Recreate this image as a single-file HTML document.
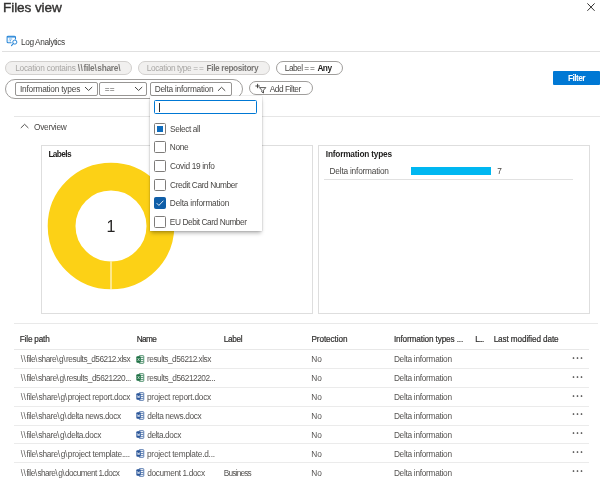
<!DOCTYPE html>
<html lang="en">
<head>
<meta charset="utf-8">
<title>Files view</title>
<style>
html,body{margin:0;padding:0;background:#fff;}
body{will-change:transform;width:603px;height:480px;position:relative;overflow:hidden;font-family:"Liberation Sans",sans-serif;color:#323130;font-size:8.3px;}
.a{position:absolute;white-space:nowrap;line-height:1;}
.hl{position:absolute;height:1px;background:#e3e3e3;}
.pill{position:absolute;box-sizing:border-box;border:1px solid #a09e9c;border-radius:8px;background:#fff;}
.pill.dis{background:#f1f0ef;border-color:#d2d0ce;}
.sel{position:absolute;box-sizing:border-box;border:1px solid #979593;border-radius:2px;background:#fff;}
.cb{position:absolute;box-sizing:border-box;width:12px;height:12px;border:1px solid #7e7c7a;border-radius:1.5px;background:#fff;}
.card{position:absolute;box-sizing:border-box;border:1px solid #dedede;background:#fff;}
b{font-weight:700;}
.bs{letter-spacing:0.55px;}
</style>
</head>
<body>

<!-- Title -->
<div class="a" id="title" style="left:3.06px;top:0.8px;font-size:13.6px;letter-spacing:-0.100px;color:#323130;-webkit-text-stroke:0.38px #323130;">Files view</div>
<svg class="a" style="left:586px;top:2px" width="10" height="10" viewBox="0 0 10 10"><path d="M1.4 1.4 L8.6 8.8 M8.6 1.4 L1.4 8.8" stroke="#323130" stroke-width="1" fill="none"/></svg>
<svg class="a" style="left:6px;top:35px" width="12" height="12" viewBox="0 0 12 12">
 <path d="M1.1 6.8 V2.2 Q1.1 1.2 2.1 1.2 H8.5 Q9.5 1.2 9.5 2.2 V4.6 M1.1 6.8 Q1.1 7.8 2.1 7.8 H5.6" stroke="#2b88d8" stroke-width="1.05" fill="none"/>
 <path d="M1.3 1.9 H9.3" stroke="#2b88d8" stroke-width="1.3"/>
 <path d="M2.9 4 H6.2" stroke="#4ba0e8" stroke-width="0.8"/>
 <path d="M3.1 6.4 V5.4 M4.5 6.4 V5" stroke="#4ba0e8" stroke-width="0.8"/>
 <circle cx="8.8" cy="7.1" r="2.05" stroke="#2b88d8" stroke-width="1" fill="#fff"/>
 <path d="M7.3 8.7 L5.5 10.7" stroke="#2b88d8" stroke-width="1.1" stroke-linecap="round"/>
</svg>
<div class="a" id="la" style="left:21.00px;top:38px;font-size:8.3px;letter-spacing:-0.396px;color:#3b3a39;">Log Analytics</div>
<div class="hl" style="left:2px;top:51px;width:598px;background:#e0e0e0;"></div>
<div class="pill dis" style="left:5.3px;top:61px;width:126.5px;height:14px;"></div>
<div class="a" id="p1" style="left:15.20px;top:64.2px;font-size:8.3px;letter-spacing:-0.245px;color:#a8a6a4;">Location contains <b style="color:#7a7876"><span class="bs">\</span><span class="bs">\</span>file<span class="bs">\</span>share<span class="bs">\</span></b></div>
<div class="pill dis" style="left:137.5px;top:61px;width:132.5px;height:14px;"></div>
<div class="a" id="p2" style="left:146.70px;top:64.2px;font-size:8.3px;letter-spacing:-0.365px;color:#a8a6a4;">Location type <span style="letter-spacing:0.8px">==</span> <b style="color:#7a7876">File repository</b></div>
<div class="pill" style="left:275.5px;top:61px;width:67.8px;height:14px;"></div>
<div class="a" id="p3" style="left:284.85px;top:64.2px;font-size:8.3px;letter-spacing:-0.527px;color:#484644;">Label <span style="letter-spacing:0.8px">==</span> <b style="color:#201f1e">Any</b></div>
<div class="a" style="left:553.3px;top:71.2px;width:47px;height:13.8px;background:#0078d4;border-radius:1px;"></div>
<div class="a" id="fb" style="left:568.10px;top:74.0px;font-size:8.3px;letter-spacing:-0.570px;color:#fff;font-weight:700;">Filter</div>
<div class="pill" style="left:5.3px;top:78.5px;width:237.5px;height:20px;border-radius:10px;"></div>
<div class="sel" style="left:14.8px;top:81.5px;width:83px;height:14px;"></div>
<div class="a" id="s1" style="left:19.95px;top:84.8px;font-size:8.3px;letter-spacing:-0.206px;color:#484644;">Information types</div>
<svg class="a" style="left:84px;top:85.8px" width="9.2" height="6" viewBox="0 0 9.2 6"><path d="M1 1 L4.6 4.5 L8.2 1" stroke="#484644" stroke-width="1" fill="none"/></svg>
<div class="sel" style="left:99.4px;top:81.5px;width:47.9px;height:14px;"></div>
<div class="a" id="s2" style="left:104.80px;top:84.8px;font-size:8.3px;letter-spacing:0.200px;color:#484644;">==</div>
<svg class="a" style="left:133.7px;top:85.8px" width="9.2" height="6" viewBox="0 0 9.2 6"><path d="M1 1 L4.6 4.5 L8.2 1" stroke="#484644" stroke-width="1" fill="none"/></svg>
<div class="sel" style="left:149.8px;top:81.5px;width:82px;height:14px;"></div>
<div class="a" id="s3" style="left:154.70px;top:84.8px;font-size:8.3px;letter-spacing:-0.238px;color:#484644;">Delta information</div>
<svg class="a" style="left:217.4px;top:85.8px" width="9.2" height="6" viewBox="0 0 9.2 6"><path d="M1 4.8 L4.6 1.3 L8.2 4.8" stroke="#484644" stroke-width="1" fill="none"/></svg>
<div class="pill" style="left:248.8px;top:81.2px;width:64px;height:14.3px;"></div>
<svg class="a" style="left:255px;top:83px" width="12" height="11" viewBox="0 0 12 11">
 <path d="M2.6 0.8 V5.2 M0.4 3 H4.8" stroke="#323130" stroke-width="0.9" fill="none"/>
 <path d="M4.4 4.6 H10.8 L8.5 7.2 V10 L6.8 9 V7.2 Z" stroke="#323130" stroke-width="0.8" fill="#fff" stroke-linejoin="round"/>
</svg>
<div class="a" id="af" style="left:269.70px;top:84.6px;font-size:8.3px;letter-spacing:-0.433px;color:#484644;">Add Filter</div>
<div class="hl" style="left:14px;top:116px;width:586px;background:#e6e6e6;"></div>
<svg class="a" style="left:19.8px;top:123.4px" width="9.2" height="6" viewBox="0 0 9.2 6"><path d="M0.8 5 L4.6 1.3 L8.4 5" stroke="#484644" stroke-width="0.95" fill="none"/></svg>
<div class="a" id="ov" style="left:33.95px;top:123.2px;font-size:8.3px;letter-spacing:-0.250px;color:#484644;">Overview</div>
<div class="card" style="left:41px;top:145.4px;width:272px;height:169px;"></div>
<div class="a" id="lb" style="left:48.40px;top:150.3px;font-size:8.3px;letter-spacing:-0.620px;color:#201f1e;font-weight:700;">Labels</div>
<svg class="a" style="left:45.6px;top:160.9px" width="130" height="130" viewBox="0 0 130 130">
 <circle cx="65" cy="65" r="49.4" fill="none" stroke="#fcd116" stroke-width="27.8"/>
 <path d="M65 100.6 V128.5" stroke="#fff" stroke-width="1"/>
 <text x="65" y="70.6" text-anchor="middle" font-family="Liberation Sans, sans-serif" font-size="16" fill="#252423">1</text>
</svg>
<div class="card" style="left:318px;top:145.4px;width:272px;height:169px;"></div>
<div class="a" id="it" style="left:325.80px;top:150.3px;font-size:8.3px;letter-spacing:-0.206px;color:#201f1e;font-weight:700;">Information types</div>
<div class="a" id="di" style="left:329.55px;top:167.2px;font-size:8.3px;letter-spacing:-0.206px;color:#484644;">Delta information</div>
<div class="a" style="left:411px;top:167.3px;width:80px;height:7.6px;background:#00b7f1;"></div>
<div class="a" id="seven" style="left:497.30px;top:167.2px;font-size:8.3px;letter-spacing:0.000px;color:#484644;">7</div>
<div class="hl" style="left:324px;top:179px;width:249px;background:#e1e1e1;"></div>
<div class="hl" style="left:14px;top:323px;width:584px;background:#e9e9e9;"></div>
<div class="a" id="h1" style="left:19.80px;top:335.7px;font-size:8.2px;letter-spacing:-0.181px;color:#323130;-webkit-text-stroke:0.2px #323130;">File path</div>
<div class="a" id="h2" style="left:136.85px;top:335.7px;font-size:8.2px;letter-spacing:-0.650px;color:#323130;-webkit-text-stroke:0.2px #323130;">Name</div>
<div class="a" id="h3" style="left:223.70px;top:335.7px;font-size:8.2px;letter-spacing:-0.288px;color:#323130;-webkit-text-stroke:0.2px #323130;">Label</div>
<div class="a" id="h4" style="left:311.40px;top:335.7px;font-size:8.2px;letter-spacing:-0.072px;color:#323130;-webkit-text-stroke:0.2px #323130;">Protection</div>
<div class="a" id="h5" style="left:393.90px;top:335.7px;font-size:8.2px;letter-spacing:-0.130px;color:#323130;-webkit-text-stroke:0.2px #323130;">Information types ...</div>
<div class="a" id="h6" style="left:475.20px;top:335.7px;font-size:8.2px;letter-spacing:-0.733px;color:#323130;-webkit-text-stroke:0.2px #323130;">L...</div>
<div class="a" id="h7" style="left:493.70px;top:335.7px;font-size:8.2px;letter-spacing:-0.118px;color:#323130;-webkit-text-stroke:0.2px #323130;">Last modified date</div>
<div class="hl" style="left:14px;top:349px;width:575px;background:#e8e8e8;"></div>
<div class="a" id="r0a" style="left:20.70px;top:355.3px;font-size:8.3px;letter-spacing:-0.491px;color:#565452;"><span class="bs">\</span><span class="bs">\</span>file<span class="bs">\</span>share<span class="bs">\</span>g<span class="bs">\</span>results_d56212.xlsx</div>
<svg class="a" style="left:136.2px;top:354.5px" width="9" height="9" viewBox="0 0 8 8"><rect x="2.6" y="0.6" width="4.3" height="6.8" rx="0.6" fill="#fff" stroke="#1e7145" stroke-width="0.75" stroke-opacity="0.9"/><path d="M4.4 2.3 H6.5 M4.4 4 H6.5 M4.4 5.7 H6.5" stroke="#1e7145" stroke-width="0.7" stroke-opacity="0.9"/><rect x="0.3" y="1.2" width="4" height="5.6" rx="0.9" fill="#1e7145"/><path d="M1.4 2.7 L3.2 5.3 M3.2 2.7 L1.4 5.3" stroke="#fff" stroke-width="0.6" stroke-opacity="0.8" fill="none"/></svg>
<div class="a" id="r0b" style="left:147.00px;top:355.3px;font-size:8.3px;letter-spacing:-0.497px;color:#565452;">results_d56212.xlsx</div>
<div class="a" id="r0d" style="left:311.35px;top:355.3px;font-size:8.3px;letter-spacing:-0.050px;color:#565452;">No</div>
<div class="a" id="r0e" style="left:393.90px;top:355.3px;font-size:8.3px;letter-spacing:-0.284px;color:#565452;">Delta information</div>
<svg class="a" style="left:572px;top:355.7px" width="12" height="4" viewBox="0 0 12 4"><circle cx="1.5" cy="2" r="0.85" fill="#323130"/><circle cx="5.5" cy="2" r="0.85" fill="#323130"/><circle cx="9.5" cy="2" r="0.85" fill="#323130"/></svg>
<div class="hl" style="left:14px;top:367.9px;width:575px;background:#ebebeb;"></div>
<div class="a" id="r1a" style="left:20.70px;top:374.2px;font-size:8.3px;letter-spacing:-0.453px;color:#565452;"><span class="bs">\</span><span class="bs">\</span>file<span class="bs">\</span>share<span class="bs">\</span>g<span class="bs">\</span>results_d5621220...</div>
<svg class="a" style="left:136.2px;top:373.4px" width="9" height="9" viewBox="0 0 8 8"><rect x="2.6" y="0.6" width="4.3" height="6.8" rx="0.6" fill="#fff" stroke="#1e7145" stroke-width="0.75" stroke-opacity="0.9"/><path d="M4.4 2.3 H6.5 M4.4 4 H6.5 M4.4 5.7 H6.5" stroke="#1e7145" stroke-width="0.7" stroke-opacity="0.9"/><rect x="0.3" y="1.2" width="4" height="5.6" rx="0.9" fill="#1e7145"/><path d="M1.4 2.7 L3.2 5.3 M3.2 2.7 L1.4 5.3" stroke="#fff" stroke-width="0.6" stroke-opacity="0.8" fill="none"/></svg>
<div class="a" id="r1b" style="left:147.00px;top:374.2px;font-size:8.3px;letter-spacing:-0.468px;color:#565452;">results_d56212202...</div>
<div class="a" id="r1d" style="left:311.35px;top:374.2px;font-size:8.3px;letter-spacing:-0.050px;color:#565452;">No</div>
<div class="a" id="r1e" style="left:393.90px;top:374.2px;font-size:8.3px;letter-spacing:-0.284px;color:#565452;">Delta information</div>
<svg class="a" style="left:572px;top:374.6px" width="12" height="4" viewBox="0 0 12 4"><circle cx="1.5" cy="2" r="0.85" fill="#323130"/><circle cx="5.5" cy="2" r="0.85" fill="#323130"/><circle cx="9.5" cy="2" r="0.85" fill="#323130"/></svg>
<div class="hl" style="left:14px;top:386.8px;width:575px;background:#ebebeb;"></div>
<div class="a" id="r2a" style="left:20.70px;top:393.1px;font-size:8.3px;letter-spacing:-0.332px;color:#565452;"><span class="bs">\</span><span class="bs">\</span>file<span class="bs">\</span>share<span class="bs">\</span>g<span class="bs">\</span>project report.docx</div>
<svg class="a" style="left:136.2px;top:392.3px" width="9" height="9" viewBox="0 0 8 8"><rect x="2.6" y="0.6" width="4.3" height="6.8" rx="0.6" fill="#fff" stroke="#2b579a" stroke-width="0.75" stroke-opacity="0.9"/><path d="M4.4 2.3 H6.5 M4.4 4 H6.5 M4.4 5.7 H6.5" stroke="#2b579a" stroke-width="0.7" stroke-opacity="0.9"/><rect x="0.3" y="1.2" width="4" height="5.6" rx="0.9" fill="#2b579a"/><path d="M1.1 2.8 L1.8 5.2 L2.3 3.5 L2.8 5.2 L3.5 2.8" stroke="#fff" stroke-width="0.6" stroke-opacity="0.8" fill="none"/></svg>
<div class="a" id="r2b" style="left:147.00px;top:393.1px;font-size:8.3px;letter-spacing:-0.247px;color:#565452;">project report.docx</div>
<div class="a" id="r2d" style="left:311.35px;top:393.1px;font-size:8.3px;letter-spacing:-0.050px;color:#565452;">No</div>
<div class="a" id="r2e" style="left:393.90px;top:393.1px;font-size:8.3px;letter-spacing:-0.284px;color:#565452;">Delta information</div>
<svg class="a" style="left:572px;top:393.5px" width="12" height="4" viewBox="0 0 12 4"><circle cx="1.5" cy="2" r="0.85" fill="#323130"/><circle cx="5.5" cy="2" r="0.85" fill="#323130"/><circle cx="9.5" cy="2" r="0.85" fill="#323130"/></svg>
<div class="hl" style="left:14px;top:405.6px;width:575px;background:#ebebeb;"></div>
<div class="a" id="r3a" style="left:20.70px;top:411.9px;font-size:8.3px;letter-spacing:-0.384px;color:#565452;"><span class="bs">\</span><span class="bs">\</span>file<span class="bs">\</span>share<span class="bs">\</span>g<span class="bs">\</span>delta news.docx</div>
<svg class="a" style="left:136.2px;top:411.1px" width="9" height="9" viewBox="0 0 8 8"><rect x="2.6" y="0.6" width="4.3" height="6.8" rx="0.6" fill="#fff" stroke="#2b579a" stroke-width="0.75" stroke-opacity="0.9"/><path d="M4.4 2.3 H6.5 M4.4 4 H6.5 M4.4 5.7 H6.5" stroke="#2b579a" stroke-width="0.7" stroke-opacity="0.9"/><rect x="0.3" y="1.2" width="4" height="5.6" rx="0.9" fill="#2b579a"/><path d="M1.1 2.8 L1.8 5.2 L2.3 3.5 L2.8 5.2 L3.5 2.8" stroke="#fff" stroke-width="0.6" stroke-opacity="0.8" fill="none"/></svg>
<div class="a" id="r3b" style="left:147.25px;top:411.9px;font-size:8.3px;letter-spacing:-0.368px;color:#565452;">delta news.docx</div>
<div class="a" id="r3d" style="left:311.35px;top:411.9px;font-size:8.3px;letter-spacing:-0.050px;color:#565452;">No</div>
<div class="a" id="r3e" style="left:393.90px;top:411.9px;font-size:8.3px;letter-spacing:-0.284px;color:#565452;">Delta information</div>
<svg class="a" style="left:572px;top:412.3px" width="12" height="4" viewBox="0 0 12 4"><circle cx="1.5" cy="2" r="0.85" fill="#323130"/><circle cx="5.5" cy="2" r="0.85" fill="#323130"/><circle cx="9.5" cy="2" r="0.85" fill="#323130"/></svg>
<div class="hl" style="left:14px;top:424.5px;width:575px;background:#ebebeb;"></div>
<div class="a" id="r4a" style="left:20.70px;top:430.8px;font-size:8.3px;letter-spacing:-0.392px;color:#565452;"><span class="bs">\</span><span class="bs">\</span>file<span class="bs">\</span>share<span class="bs">\</span>g<span class="bs">\</span>delta.docx</div>
<svg class="a" style="left:136.2px;top:430.0px" width="9" height="9" viewBox="0 0 8 8"><rect x="2.6" y="0.6" width="4.3" height="6.8" rx="0.6" fill="#fff" stroke="#2b579a" stroke-width="0.75" stroke-opacity="0.9"/><path d="M4.4 2.3 H6.5 M4.4 4 H6.5 M4.4 5.7 H6.5" stroke="#2b579a" stroke-width="0.7" stroke-opacity="0.9"/><rect x="0.3" y="1.2" width="4" height="5.6" rx="0.9" fill="#2b579a"/><path d="M1.1 2.8 L1.8 5.2 L2.3 3.5 L2.8 5.2 L3.5 2.8" stroke="#fff" stroke-width="0.6" stroke-opacity="0.8" fill="none"/></svg>
<div class="a" id="r4b" style="left:147.25px;top:430.8px;font-size:8.3px;letter-spacing:-0.406px;color:#565452;">delta.docx</div>
<div class="a" id="r4d" style="left:311.35px;top:430.8px;font-size:8.3px;letter-spacing:-0.050px;color:#565452;">No</div>
<div class="a" id="r4e" style="left:393.90px;top:430.8px;font-size:8.3px;letter-spacing:-0.284px;color:#565452;">Delta information</div>
<svg class="a" style="left:572px;top:431.2px" width="12" height="4" viewBox="0 0 12 4"><circle cx="1.5" cy="2" r="0.85" fill="#323130"/><circle cx="5.5" cy="2" r="0.85" fill="#323130"/><circle cx="9.5" cy="2" r="0.85" fill="#323130"/></svg>
<div class="hl" style="left:14px;top:443.4px;width:575px;background:#ebebeb;"></div>
<div class="a" id="r5a" style="left:20.70px;top:449.7px;font-size:8.3px;letter-spacing:-0.313px;color:#565452;"><span class="bs">\</span><span class="bs">\</span>file<span class="bs">\</span>share<span class="bs">\</span>g<span class="bs">\</span>project template....</div>
<svg class="a" style="left:136.2px;top:448.9px" width="9" height="9" viewBox="0 0 8 8"><rect x="2.6" y="0.6" width="4.3" height="6.8" rx="0.6" fill="#fff" stroke="#2b579a" stroke-width="0.75" stroke-opacity="0.9"/><path d="M4.4 2.3 H6.5 M4.4 4 H6.5 M4.4 5.7 H6.5" stroke="#2b579a" stroke-width="0.7" stroke-opacity="0.9"/><rect x="0.3" y="1.2" width="4" height="5.6" rx="0.9" fill="#2b579a"/><path d="M1.1 2.8 L1.8 5.2 L2.3 3.5 L2.8 5.2 L3.5 2.8" stroke="#fff" stroke-width="0.6" stroke-opacity="0.8" fill="none"/></svg>
<div class="a" id="r5b" style="left:147.00px;top:449.7px;font-size:8.3px;letter-spacing:-0.242px;color:#565452;">project template.d...</div>
<div class="a" id="r5d" style="left:311.35px;top:449.7px;font-size:8.3px;letter-spacing:-0.050px;color:#565452;">No</div>
<div class="a" id="r5e" style="left:393.90px;top:449.7px;font-size:8.3px;letter-spacing:-0.284px;color:#565452;">Delta information</div>
<svg class="a" style="left:572px;top:450.1px" width="12" height="4" viewBox="0 0 12 4"><circle cx="1.5" cy="2" r="0.85" fill="#323130"/><circle cx="5.5" cy="2" r="0.85" fill="#323130"/><circle cx="9.5" cy="2" r="0.85" fill="#323130"/></svg>
<div class="hl" style="left:14px;top:462.3px;width:575px;background:#ebebeb;"></div>
<div class="a" id="r6a" style="left:20.70px;top:468.6px;font-size:8.3px;letter-spacing:-0.591px;color:#565452;"><span class="bs">\</span><span class="bs">\</span>file<span class="bs">\</span>share<span class="bs">\</span>g<span class="bs">\</span>document 1.docx</div>
<svg class="a" style="left:136.2px;top:467.8px" width="9" height="9" viewBox="0 0 8 8"><rect x="2.6" y="0.6" width="4.3" height="6.8" rx="0.6" fill="#fff" stroke="#2b579a" stroke-width="0.75" stroke-opacity="0.9"/><path d="M4.4 2.3 H6.5 M4.4 4 H6.5 M4.4 5.7 H6.5" stroke="#2b579a" stroke-width="0.7" stroke-opacity="0.9"/><rect x="0.3" y="1.2" width="4" height="5.6" rx="0.9" fill="#2b579a"/><path d="M1.1 2.8 L1.8 5.2 L2.3 3.5 L2.8 5.2 L3.5 2.8" stroke="#fff" stroke-width="0.6" stroke-opacity="0.8" fill="none"/></svg>
<div class="a" id="r6b" style="left:147.25px;top:468.6px;font-size:8.3px;letter-spacing:-0.386px;color:#565452;">document 1.docx</div>
<div class="a" id="r6c" style="left:223.85px;top:468.6px;font-size:8.3px;letter-spacing:-0.821px;color:#565452;">Business</div>
<div class="a" id="r6d" style="left:311.35px;top:468.6px;font-size:8.3px;letter-spacing:-0.050px;color:#565452;">No</div>
<div class="a" id="r6e" style="left:393.90px;top:468.6px;font-size:8.3px;letter-spacing:-0.284px;color:#565452;">Delta information</div>
<svg class="a" style="left:572px;top:469.0px" width="12" height="4" viewBox="0 0 12 4"><circle cx="1.5" cy="2" r="0.85" fill="#323130"/><circle cx="5.5" cy="2" r="0.85" fill="#323130"/><circle cx="9.5" cy="2" r="0.85" fill="#323130"/></svg>
<!-- Dropdown -->
<div class="a" style="left:149.8px;top:96px;width:112.4px;height:135px;background:#fff;box-shadow:0 2.5px 4px -1px rgba(0,0,0,0.3),0 0 1.5px rgba(0,0,0,0.24);"></div>
<div class="a" style="left:154.4px;top:100.1px;width:102.6px;height:14.4px;box-sizing:border-box;border:1.8px solid #0078d4;border-radius:1.5px;background:#fff;"></div>
<div class="a" style="left:159.2px;top:103px;width:0.8px;height:9px;background:#323130;"></div>
<div class="cb" style="left:154.2px;top:122.6px;"></div>
<div class="a" style="left:157.1px;top:125.5px;width:6.2px;height:6.2px;background:#0f6cbd;"></div>
<div class="a" id="d0" style="left:170.10px;top:124.5px;font-size:8.3px;letter-spacing:-0.378px;color:#484644;">Select all</div>
<div class="cb" style="left:154.2px;top:141.3px;"></div>
<div class="a" id="d1" style="left:169.85px;top:143.2px;font-size:8.3px;letter-spacing:-0.317px;color:#484644;">None</div>
<div class="cb" style="left:154.2px;top:160.0px;"></div>
<div class="a" id="d2" style="left:170.10px;top:161.9px;font-size:8.3px;letter-spacing:-0.313px;color:#484644;">Covid 19 info</div>
<div class="cb" style="left:154.2px;top:178.7px;"></div>
<div class="a" id="d3" style="left:170.10px;top:180.6px;font-size:8.3px;letter-spacing:-0.382px;color:#484644;">Credit Card Number</div>
<div class="cb" style="left:154.2px;top:197.4px;background:#0f5ea8;border-color:#0f5ea8;"></div>
<svg class="a" style="left:154.2px;top:197.4px" width="12" height="12" viewBox="0 0 12 12"><path d="M2.7 6.2 L4.9 8.4 L9.4 3.7" stroke="#fff" stroke-width="0.9" fill="none"/></svg>
<div class="a" id="d4" style="left:169.85px;top:199.3px;font-size:8.3px;letter-spacing:-0.206px;color:#484644;">Delta information</div>
<div class="cb" style="left:154.2px;top:216.1px;"></div>
<div class="a" id="d5" style="left:169.85px;top:218.0px;font-size:8.3px;letter-spacing:-0.429px;color:#484644;">EU Debit Card Number</div>

</body>
</html>
